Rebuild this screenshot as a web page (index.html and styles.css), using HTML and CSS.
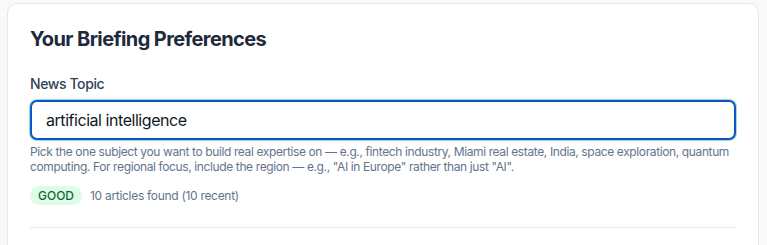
FILE: index.html
```html
<!DOCTYPE html>
<html lang="en">
<head>
<meta charset="utf-8">
<title>Briefing Preferences</title>
<link rel="stylesheet" href="styles.css">
</head>
<body>
<div class="page">
  <section class="card">
    <h2 class="title">Your Briefing Preferences</h2>
    <div class="field">
      <label class="label" for="topic">News Topic</label>
      <input class="input" id="topic" type="text" value="artificial intelligence">
      <p class="help">Pick the one subject you want to build real expertise on — e.g., fintech industry, Miami real estate, India, space exploration, quantum computing. For regional focus, include the region — e.g., "AI in Europe" rather than just "AI".</p>
      <div class="status">
        <span class="badge">GOOD</span>
        <span class="status-text">10 articles found (10 recent)</span>
      </div>
    </div>
    <hr class="divider">
  </section>
</div>
</body>
</html>
```
FILE: styles.css
```css
* { box-sizing: border-box; }
html, body { margin: 0; padding: 0; }
body {
  background: #f8f9fb;
  font-family: Inter, "Noto Sans", "Liberation Sans", sans-serif;
  color: #1f2937;
  overflow: hidden;
  height: 245px;
}
.page {
  padding: 3px 8px 0 7px;
}
.card {
  width: 752px;
  background: #ffffff;
  border: 1px solid #e5e7eb;
  border-radius: 10px;
  padding: 21px 22px 40px 22px;
}
.title {
  margin: 0;
  font-size: 20px;
  line-height: 28px;
  font-weight: 700;
  letter-spacing: -0.6px;
  color: #1e293b;
}
.field {
  margin-top: 21px;
  display: flex;
  flex-direction: column;
}
.label {
  font-size: 14px;
  line-height: 20px;
  font-weight: 500;
  letter-spacing: -0.4px;
  color: #334155;
  margin-bottom: 6px;
}
.input {
  display: block;
  width: 100%;
  height: 40px;
  border: 2px solid #0a58c2;
  border-radius: 7px;
  box-shadow: 0 0 0 1px #a3dcd6;
  padding: 0 14px;
  font-family: inherit;
  font-size: 16px;
  letter-spacing: -0.45px;
  color: #111827;
  background: #fff;
  outline: none;
}
.help {
  margin: 4px 0 0 0;
  font-size: 12px;
  line-height: 15px;
  letter-spacing: -0.38px;
  color: #64748b;
}
.status {
  margin-top: 12px;
  display: flex;
  align-items: center;
  gap: 8px;
}
.badge {
  display: inline-flex;
  align-items: center;
  height: 19px;
  padding: 0 8px;
  border-radius: 10px;
  background: #dcfce7;
  color: #166534;
  font-size: 12px;
  font-weight: 500;
}
.status-text {
  font-size: 12px;
  letter-spacing: -0.3px;
  color: #64748b;
}
.divider {
  margin: 22px 0 0 0;
  border: 0;
  border-top: 1px solid #e2e8f0;
}
```
